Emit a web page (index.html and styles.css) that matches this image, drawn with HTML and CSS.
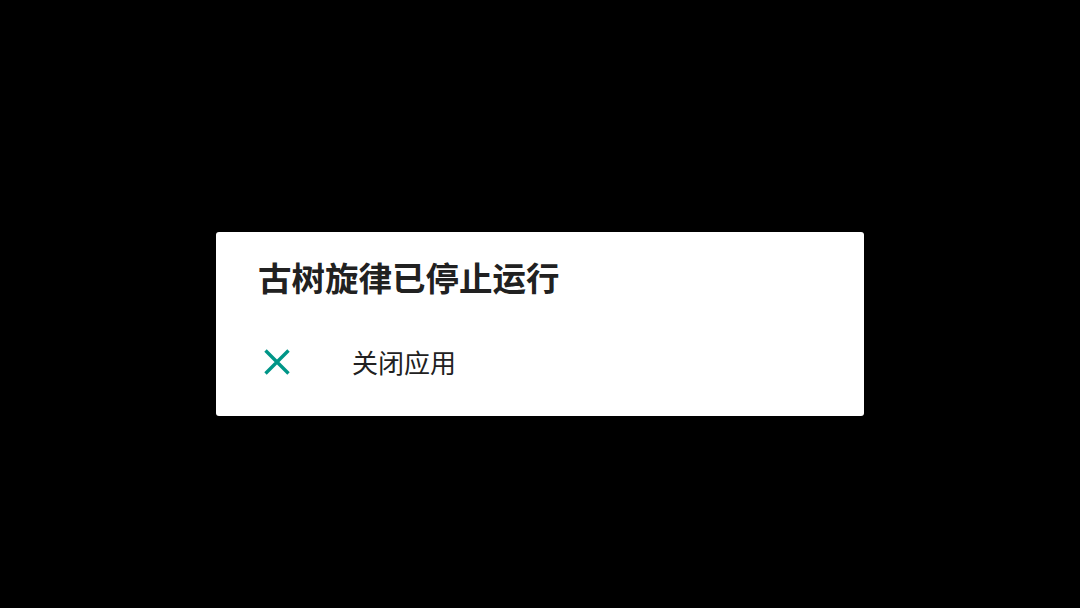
FILE: index.html
```html
<!DOCTYPE html>
<html lang="zh-CN">
<head>
<meta charset="utf-8">
<link rel="stylesheet" href="styles.css">
</head>
<body>
<div class="screen">
  <div class="dialog">
    <h1 class="title">古树旋律已停止运行</h1>
    <div class="action">
      <svg class="icon" viewBox="0 0 26 26" width="26" height="26">
        <path d="M1.5 1.5 L24.5 24.5 M24.5 1.5 L1.5 24.5" stroke="#009688" stroke-width="3.4" fill="none"/>
      </svg>
      <span class="label">关闭应用</span>
    </div>
  </div>
</div>
</body>
</html>
```
FILE: styles.css
```css
html, body {
  margin: 0;
  padding: 0;
  background: #000;
  width: 1080px;
  height: 608px;
  overflow: hidden;
}
.screen {
  padding-top: 232px;
  padding-left: 216px;
}
.dialog {
  width: 648px;
  height: 184px;
  box-sizing: border-box;
  background: #fff;
  border-radius: 3px;
  padding: 23px 0 0 42px;
  font-family: "Noto Sans CJK SC", "Noto Sans", sans-serif;
}
.title {
  margin: 0;
  font-size: 33.5px;
  line-height: 44px;
  font-weight: 700;
  color: #212121;
}
.action {
  display: flex;
  align-items: center;
  margin-top: 46px;
  margin-left: 6px;
}
.icon {
  display: block;
  flex: none;
}
.label {
  margin-left: 62px;
  font-size: 26px;
  line-height: 34px;
  color: #212121;
}
```
